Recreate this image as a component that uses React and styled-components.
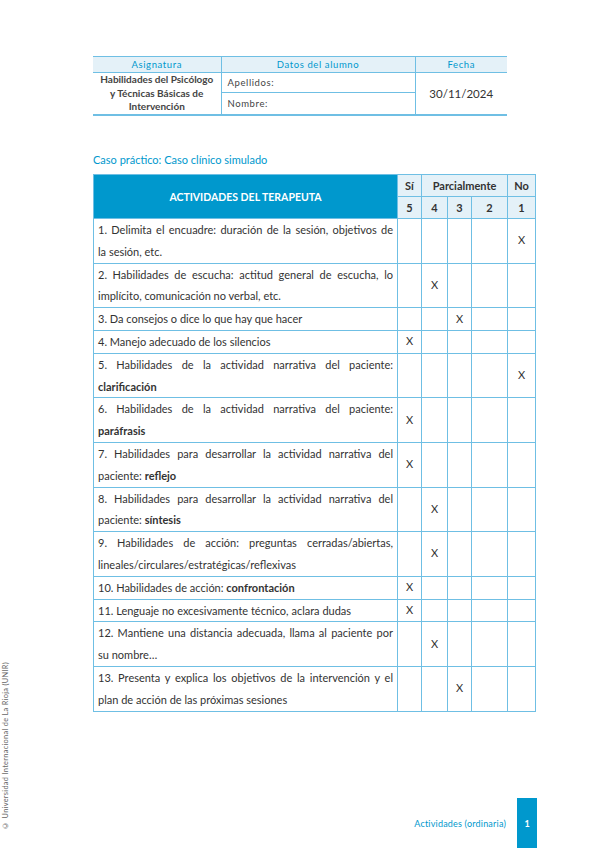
import React from 'react';
import styled, { createGlobalStyle } from 'styled-components';

const GlobalStyle = createGlobalStyle`
	html, body {
		margin: 0;
		padding: 0;
		background: #fff;
	}
	body {
		font-family: Lato, 'Liberation Sans', sans-serif;
		color: #333;
	}
`;

const BLUE = '#0098cd';
const LIGHT = '#e4f1f8';
const LINE = '#6fbfe4';

const rows = [
	{ lines: ['1. Delimita el encuadre: duración de la sesión, objetivos de', 'la sesión, etc.'], mark: 4 },
	{ lines: ['2. Habilidades de escucha: actitud general de escucha, lo', 'implícito, comunicación no verbal, etc.'], mark: 1 },
	{ lines: ['3. Da consejos o dice lo que hay que hacer'], mark: 2 },
	{ lines: ['4. Manejo adecuado de los silencios'], mark: 0 },
	{ lines: ['5. Habilidades de la actividad narrativa del paciente:', <b key="b">clarificación</b>], mark: 4 },
	{ lines: ['6. Habilidades de la actividad narrativa del paciente:', <b key="b">paráfrasis</b>], mark: 0 },
	{ lines: ['7. Habilidades  para desarrollar la actividad narrativa del', <>paciente: <b>reflejo</b></>], mark: 0 },
	{ lines: ['8. Habilidades  para desarrollar la actividad narrativa del', <>paciente: <b>síntesis</b></>], mark: 1 },
	{ lines: ['9. Habilidades de acción: preguntas cerradas/abiertas,', 'lineales/circulares/estratégicas/reflexivas'], mark: 1 },
	{ lines: [<>10. Habilidades de acción: <b>confrontación</b></>], mark: 0 },
	{ lines: ['11. Lenguaje no excesivamente técnico, aclara dudas'], mark: 0 },
	{ lines: ['12. Mantiene una distancia adecuada, llama al paciente por', 'su nombre…'], mark: 1 },
	{ lines: ['13. Presenta y explica los objetivos de la intervención y el', 'plan de acción de las próximas sesiones'], mark: 2 },
];

const Page = styled.div`
	width: 599px;
	height: 848px;
	display: flex;
	overflow: hidden;
`;

const Gutter = styled.div`
	width: 93px;
	flex: none;
	display: flex;
	flex-direction: column;
	justify-content: flex-end;
	padding: 0 0 18px 1px;
	box-sizing: border-box;
`;

const SideNote = styled.div`
	writing-mode: vertical-rl;
	transform: rotate(180deg);
	font-size: 7.4px;
	letter-spacing: 0.3px;
	color: #666;
	line-height: 10px;
`;

const Main = styled.div`
	flex: 1;
	display: flex;
	flex-direction: column;
	padding-top: 56px;
`;

const InfoTable = styled.table`
	width: 414px;
	border-collapse: collapse;
	table-layout: fixed;
	border-top: 1px solid ${LINE};
	border-bottom: 2px solid ${LINE};
	font-size: 9.5px;
	td, th {
		padding: 0;
	}
`;

const InfoHead = styled.th`
	background: ${LIGHT};
	color: ${BLUE};
	font-weight: 400;
	letter-spacing: 0.6px;
	height: 15px;
	text-align: center;
	border-bottom: 1px solid ${LINE};
	border-left: ${(p) => (p.$first ? 'none' : `1px solid ${LINE}`)};
`;

const Subject = styled.td`
	text-align: center;
	font-weight: 700;
	font-size: 10px;
	line-height: 13.5px;
	padding: 0 !important;
	color: #444;
`;

const Field = styled.td`
	border-left: 1px solid ${LINE};
	border-bottom: ${(p) => (p.$top ? `1px solid ${LINE}` : 'none')};
	height: ${(p) => (p.$top ? '19px' : '21px')};
	padding-left: 6px !important;
	letter-spacing: 0.6px;
	color: #444;
`;

const DateCell = styled.td`
	border-left: 1px solid ${LINE};
	text-align: center;
	font-size: 11.5px;
	color: #333;
`;

const Title = styled.div`
	margin-top: 37px;
	font-size: 11px;
	color: ${BLUE};
	line-height: 14px;
`;

const Grid = styled.table`
	margin-top: 7px;
	width: 442px;
	border-collapse: collapse;
	table-layout: fixed;
	border: 1px solid ${LINE};
	td, th {
		padding: 0;
	}
`;

const MainHead = styled.th`
	background: ${BLUE};
	color: #fff;
	font-size: 10.5px;
	font-weight: 700;
	text-align: center;
	border-bottom: 1px solid ${LINE};
`;

const ScoreHead = styled.th`
	background: ${LIGHT};
	color: #333;
	font-size: 11px;
	font-weight: 700;
	text-align: center;
	height: 21px;
	border: 1px solid ${LINE};
`;

const Row = styled.tr`
	border-bottom: 1px solid ${LINE};
`;

const TextCell = styled.td`
	padding: 0 4px 0 4px !important;
	font-size: 11px;
	line-height: 21.8px;
	color: #333;
	b {
		font-weight: 700;
	}
`;

const Line = styled.div`
	white-space: nowrap;
	text-align: ${(p) => (p.$justify ? 'justify' : 'left')};
	text-align-last: ${(p) => (p.$justify ? 'justify' : 'left')};
`;

const MarkCell = styled.td`
	border-left: 1px solid ${LINE};
	text-align: center;
	font-size: 11px;
	color: #333;
	padding-bottom: 2px !important;
`;

const Footer = styled.div`
	margin-top: auto;
	display: flex;
	align-items: center;
	justify-content: flex-end;
	gap: 11px;
	padding-right: 62px;
	height: 50px;
`;

const FooterLabel = styled.span`
	font-size: 9px;
	color: ${BLUE};
	letter-spacing: 0.2px;
`;

const PageTab = styled.div`
	width: 20px;
	height: 50px;
	background: ${BLUE};
	color: #fff;
	font-size: 9px;
	font-weight: 700;
	display: flex;
	align-items: center;
	justify-content: center;
`;

const App = () => (
	<>
		<GlobalStyle />
		<Page>
			<Gutter>
				<SideNote>© Universidad Internacional de La Rioja (UNIR)</SideNote>
			</Gutter>
			<Main>
				<InfoTable>
					<colgroup>
						<col style={{ width: 128 }} />
						<col style={{ width: 194 }} />
						<col style={{ width: 92 }} />
					</colgroup>
					<thead>
						<tr>
							<InfoHead $first>Asignatura</InfoHead>
							<InfoHead>Datos del alumno</InfoHead>
							<InfoHead>Fecha</InfoHead>
						</tr>
					</thead>
					<tbody>
						<tr>
							<Subject rowSpan={2}>
								Habilidades del Psicólogo
								<br />y Técnicas Básicas de
								<br />
								Intervención
							</Subject>
							<Field $top>Apellidos:</Field>
							<DateCell rowSpan={2}>30/11/2024</DateCell>
						</tr>
						<tr>
							<Field>Nombre:</Field>
						</tr>
					</tbody>
				</InfoTable>

				<Title>Caso práctico: Caso clínico simulado</Title>

				<Grid>
					<colgroup>
						<col style={{ width: 304 }} />
						<col style={{ width: 24 }} />
						<col style={{ width: 26 }} />
						<col style={{ width: 24 }} />
						<col style={{ width: 36 }} />
						<col style={{ width: 28 }} />
					</colgroup>
					<thead>
						<tr>
							<MainHead rowSpan={2}>ACTIVIDADES DEL TERAPEUTA</MainHead>
							<ScoreHead>Sí</ScoreHead>
							<ScoreHead colSpan={3}>Parcialmente</ScoreHead>
							<ScoreHead>No</ScoreHead>
						</tr>
						<tr>
							{['5', '4', '3', '2', '1'].map((n) => (
								<ScoreHead key={n}>{n}</ScoreHead>
							))}
						</tr>
					</thead>
					<tbody>
						{rows.map((r, i) => (
							<Row key={i}>
								<TextCell>
									{r.lines.map((l, j) => (
										<Line key={j} $justify={j < r.lines.length - 1}>
											{l}
										</Line>
									))}
								</TextCell>
								{[0, 1, 2, 3, 4].map((c) => (
									<MarkCell key={c}>{r.mark === c ? 'X' : ''}</MarkCell>
								))}
							</Row>
						))}
					</tbody>
				</Grid>

				<Footer>
					<FooterLabel>Actividades (ordinaria)</FooterLabel>
					<PageTab>1</PageTab>
				</Footer>
			</Main>
		</Page>
	</>
);

export default App;
